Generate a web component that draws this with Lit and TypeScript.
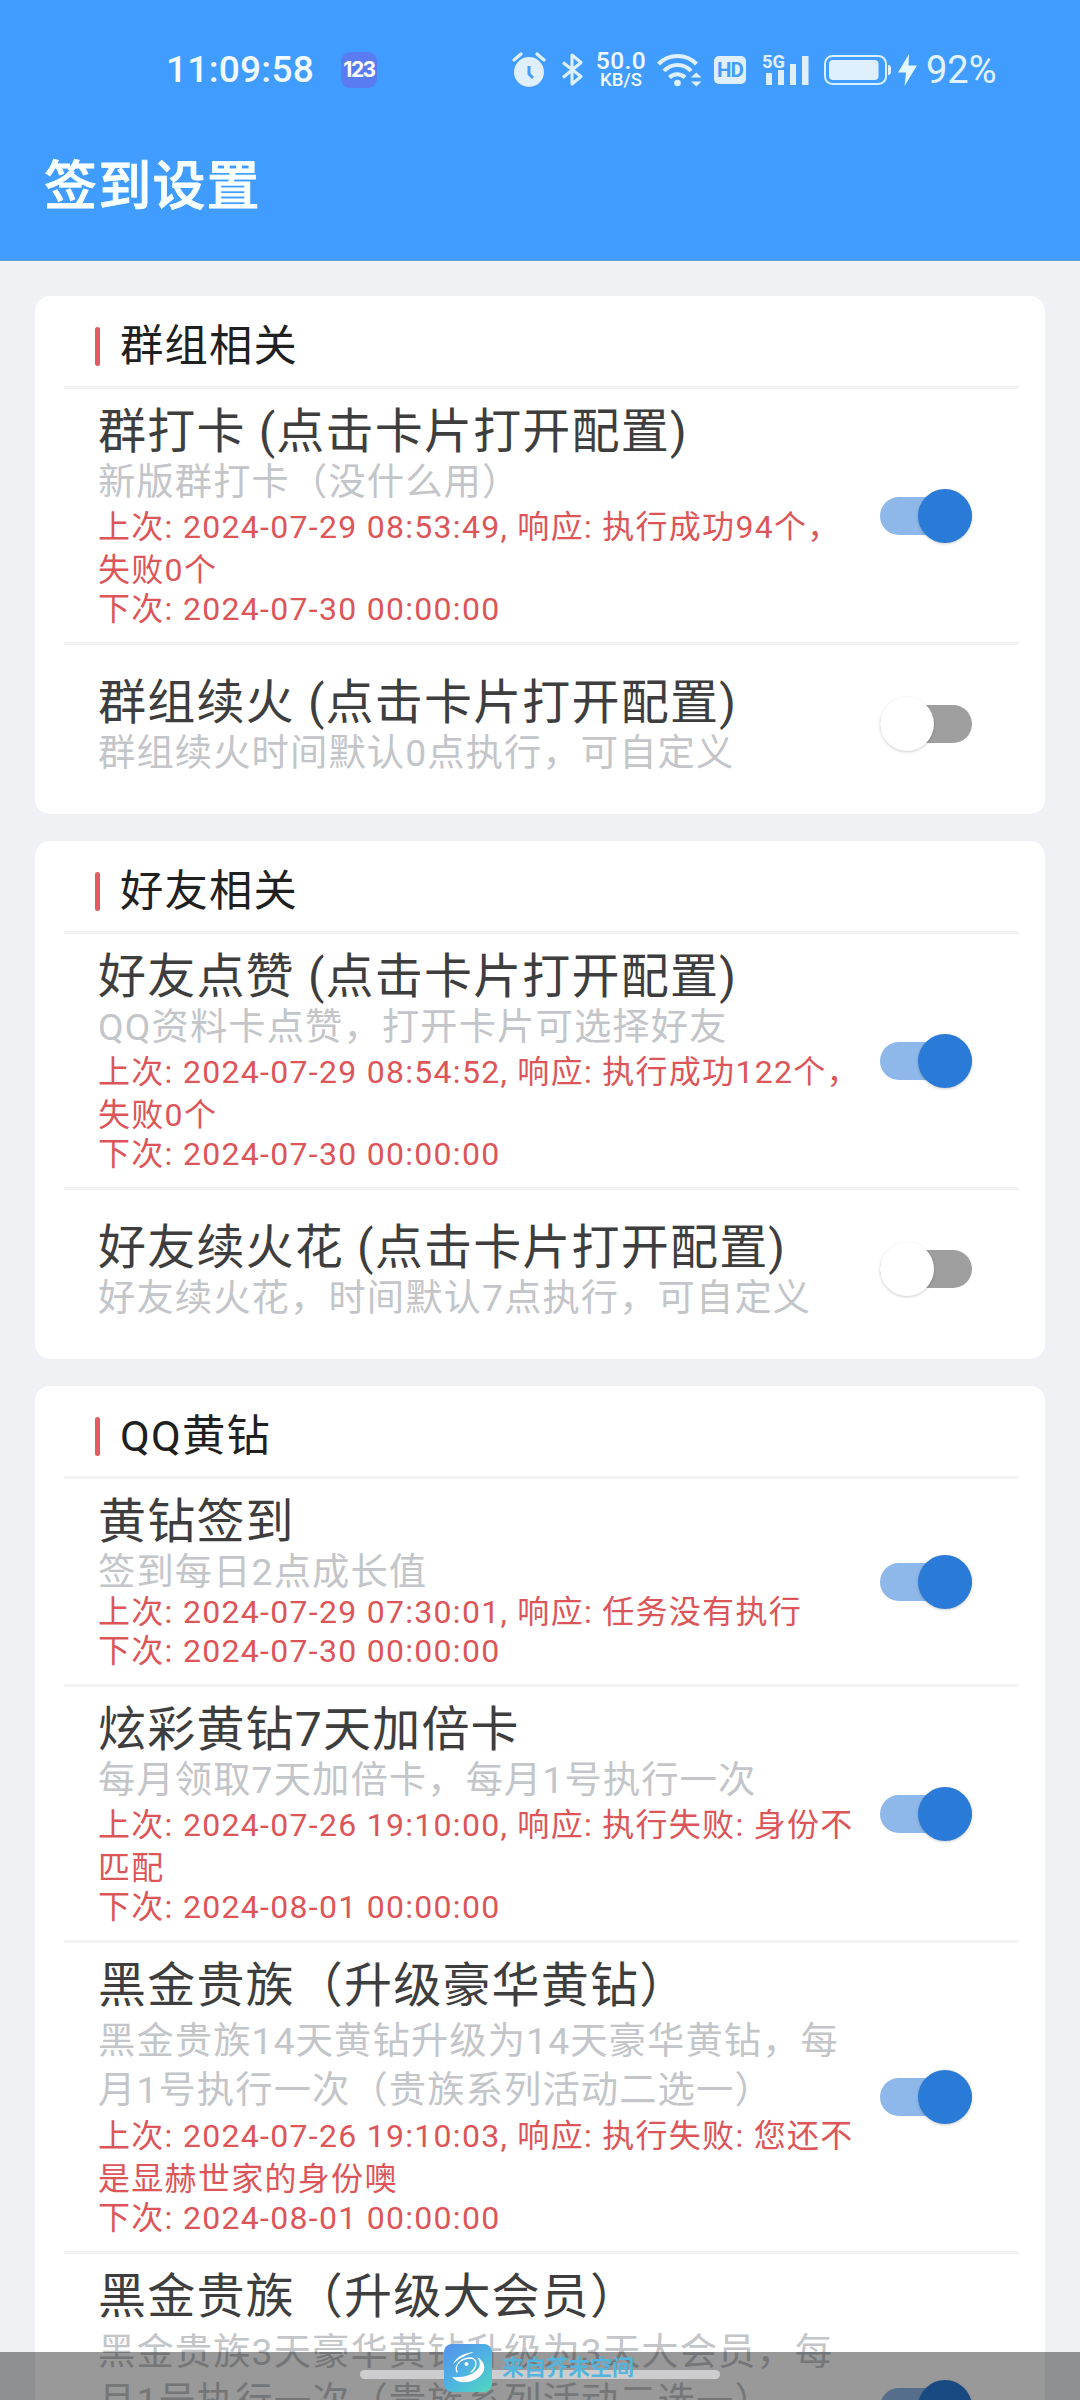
import { LitElement, html, css, svg } from "lit";
import { customElement, property } from "lit/decorators.js";
import { classMap } from "lit/directives/class-map.js";

interface Task {
  title: string;
  desc: string[];
  last?: string[];
  next?: string;
  on: boolean;
  clipped?: boolean;
}

interface Group {
  name: string;
  tasks: Task[];
}

const GROUPS: Group[] = [
  {
    name: "群组相关",
    tasks: [
      {
        title: "群打卡 (点击卡片打开配置)",
        desc: ["新版群打卡（没什么用）"],
        last: ["上次: 2024-07-29 08:53:49, 响应: 执行成功94个，", "失败0个"],
        next: "下次: 2024-07-30 00:00:00",
        on: true,
      },
      {
        title: "群组续火 (点击卡片打开配置)",
        desc: ["群组续火时间默认0点执行，可自定义"],
        on: false,
      },
    ],
  },
  {
    name: "好友相关",
    tasks: [
      {
        title: "好友点赞 (点击卡片打开配置)",
        desc: ["QQ资料卡点赞，打开卡片可选择好友"],
        last: ["上次: 2024-07-29 08:54:52, 响应: 执行成功122个，", "失败0个"],
        next: "下次: 2024-07-30 00:00:00",
        on: true,
      },
      {
        title: "好友续火花 (点击卡片打开配置)",
        desc: ["好友续火花，时间默认7点执行，可自定义"],
        on: false,
      },
    ],
  },
  {
    name: "QQ黄钻",
    tasks: [
      {
        title: "黄钻签到",
        desc: ["签到每日2点成长值"],
        last: ["上次: 2024-07-29 07:30:01, 响应: 任务没有执行"],
        next: "下次: 2024-07-30 00:00:00",
        on: true,
      },
      {
        title: "炫彩黄钻7天加倍卡",
        desc: ["每月领取7天加倍卡，每月1号执行一次"],
        last: ["上次: 2024-07-26 19:10:00, 响应: 执行失败: 身份不", "匹配"],
        next: "下次: 2024-08-01 00:00:00",
        on: true,
      },
      {
        title: "黑金贵族（升级豪华黄钻）",
        desc: ["黑金贵族14天黄钻升级为14天豪华黄钻，每", "月1号执行一次（贵族系列活动二选一）"],
        last: ["上次: 2024-07-26 19:10:03, 响应: 执行失败: 您还不", "是显赫世家的身份噢"],
        next: "下次: 2024-08-01 00:00:00",
        on: true,
      },
      {
        title: "黑金贵族（升级大会员）",
        desc: ["黑金贵族3天豪华黄钻升级为3天大会员，每", "月1号执行一次（贵族系列活动二选一）"],
        on: true,
        clipped: true,
      },
    ],
  },
];

@customElement("status-bar")
class StatusBar extends LitElement {
  static styles = css`
    :host {
      display: flex;
      align-items: center;
      height: 140px;
      padding-left: 166px;
      box-sizing: border-box;
      color: #f0faff;
      font-family: Roboto, "Noto Sans CJK SC", sans-serif;
      white-space: nowrap;
    }
    svg { display: block; flex: none; }
    .time { width: 175px; font-size: 37px; line-height: 44px; letter-spacing: 0.3px; font-weight: 500; }
    .app {
      width: 36px; height: 36px; border-radius: 9px; background: #5a7cf2;
      display: flex; align-items: center; justify-content: center;
      font: 700 21px/36px Inter, sans-serif; letter-spacing: -1.5px; color: #fff;
    }
    .alarm { margin-left: 135px; }
    .bt { margin-left: 15px; }
    .speed { margin-left: 11px; width: 54px; text-align: center; font-weight: 500; }
    .rate { font-size: 24.5px; line-height: 20px; letter-spacing: 0.5px; }
    .unit { font-size: 18.5px; line-height: 18px; }
    .wifi { margin-left: 9px; }
    .hd {
      margin-left: 12px; width: 32px; height: 28px; border-radius: 5px; background: #e0effc;
      color: #439cf8; font: 700 20.5px/28px Roboto, sans-serif; text-align: center;
      letter-spacing: -1px;
    }
    .signal { margin-left: 16px; }
    .battery { margin-left: 14px; }
    .bolt { margin-left: 6px; }
    .percent { margin-left: 8px; font-size: 38px; line-height: 44px; color: #e3f3fe; }
    .gen { font: 700 18px Roboto, sans-serif; }
  `;

  render() {
    return html`
      <span class="time">11:09:58</span>
      <span class="app">123</span>
      <svg class="alarm" width="34" height="36" viewBox="0 0 34 36" fill="none">
        <circle cx="17" cy="20" r="15" fill="#e0effc" />
        <path d="M2 8 9 2M32 8 25 2" stroke="#e0effc" stroke-width="3.2" stroke-linecap="round" />
        <path d="M17 14v8l4 4" stroke="#439cf8" stroke-width="3" />
      </svg>
      <svg class="bt" width="22" height="36" viewBox="0 0 22 36" fill="none" stroke="#dff1ff" stroke-width="3" stroke-linejoin="round">
        <path d="M2 10.500 20 24.500 11 32V3L20 10.500 2 25.500" />
      </svg>
      <div class="speed">
        <div class="rate">50.0</div>
        <div class="unit">KB/S</div>
      </div>
      <svg class="wifi" width="45" height="36" viewBox="0 0 45 36" fill="none" stroke="#dff1ff">
        <path d="M1.500 12A26.500 26.500 0 0 1 39.500 12" stroke-width="4" />
        <path d="M7 19A18 18 0 0 1 34 19" stroke-width="4" />
        <path d="M12.500 25.500A11 11 0 0 1 28 25.500" stroke-width="4" />
        <circle cx="20.500" cy="31" r="3.300" fill="#dff1ff" stroke="none" />
        <path d="M34 25.500 39.300 20.500 44.500 25.500ZM34 29.500H44.500L39.300 34.500Z" fill="#dff1ff" stroke="none" />
      </svg>
      <div class="hd">HD</div>
      <svg class="signal" width="48" height="34" viewBox="0 0 48 34" fill="#e0effc">
        <text class="gen" x="0" y="15" textLength="23" lengthAdjust="spacingAndGlyphs">5G</text>
        <path d="M4 20h6v12h-6zM16 17h6v15h-6zM28 11h6v21h-6zM40 3h6.500v29h-6.500z" />
      </svg>
      <svg class="battery" width="68" height="30" viewBox="0 0 68 30">
        <rect x="1" y="1" width="61" height="28" rx="7.500" fill="none" stroke="#d9f0ff" stroke-width="2" />
        <rect x="5" y="5" width="49.500" height="20" rx="4" fill="#e0effc" />
        <path d="M64 10q3 0 3 3v4q0 3-3 3z" fill="#e0effc" />
      </svg>
      <svg class="bolt" width="20" height="32" viewBox="0 0 20 32" fill="#e6f8ff">
        <path d="M11 0 0 18.500H8L6.500 32 19 11.500H10.500Z" />
      </svg>
      <span class="percent">92%</span>
    `;
  }
}

@customElement("toggle-switch")
class ToggleSwitch extends LitElement {
  @property({ type: Boolean }) on = false;

  static styles = css`
    :host { display: block; flex: none; }
    .track {
      display: flex; align-items: center; width: 92px; height: 38px; border-radius: 19px;
      background: #9f9f9f;
    }
    .track.on { background: #8eb8e9; justify-content: flex-end; }
    .thumb {
      flex: none; width: 54px; height: 54px; border-radius: 50%; background: #fff;
      box-shadow: 0 1px 3px rgba(0, 0, 0, 0.2);
    }
    .on .thumb { background: #2a7ad8; }
  `;

  render() {
    return html`<div class=${classMap({ track: true, on: this.on })}><div class="thumb"></div></div>`;
  }
}

@customElement("task-group")
class TaskGroup extends LitElement {
  @property({ attribute: false }) group!: Group;

  static styles = css`
    :host {
      display: block;
      flex: none;
      background: #fff;
      border-radius: 15px;
      padding: 0 27px 12px 29px;
      white-space: nowrap;
    }
    .heading {
      display: flex; align-items: center; height: 90px; padding: 11px 0 0 31px;
      box-sizing: border-box; gap: 20px;
    }
    .mark { width: 5px; height: 39px; border-radius: 2.5px; background: #e35a60; }
    .name { font-size: 43.3px; line-height: 52px; letter-spacing: 1.2px; color: #202020; }
    .task {
      display: flex; align-items: center; justify-content: space-between;
      min-height: 160px; box-sizing: border-box; padding-right: 46px;
      border-top: 3px solid #f2f2f3;
    }
    .text { padding: 13px 0 14px 34px; }
    .clipped { min-height: 309px; }
    .clipped .text { align-self: flex-start; }
    .title { font-size: 48px; line-height: 60px; letter-spacing: 1.2px; color: #3e3e3e; }
    .desc { font-size: 37.3px; line-height: 41px; letter-spacing: 1.1px; color: #c3c5c9; }
    .desc.wrapped { line-height: 49px; padding-top: 1px; margin-bottom: -3px; }
    .log { font-size: 32px; line-height: 38px; letter-spacing: 1.3px; color: #dc5558; }
    .log.wrapped { line-height: 43px; padding-top: 3px; margin-bottom: -2px; }
    .log:not(.wrapped) + .log { padding-top: 1px; }
  `;

  private block(kind: string, lines: string[]) {
    return html`<div class=${classMap({ [kind]: true, wrapped: lines.length > 1 })}>
      ${lines.map((line) => html`<div>${line}</div>`)}
    </div>`;
  }

  render() {
    return html`
      <div class="heading"><span class="mark"></span><span class="name">${this.group.name}</span></div>
      ${this.group.tasks.map(
        (task) => html`
          <div class=${classMap({ task: true, clipped: !!task.clipped })}>
            <div class="text">
              <div class="title">${task.title}</div>
              ${this.block("desc", task.desc)}
              ${task.last ? this.block("log", task.last) : null}
              ${task.next ? this.block("log", [task.next]) : null}
            </div>
            <toggle-switch ?on=${task.on}></toggle-switch>
          </div>
        `
      )}
    `;
  }
}

@customElement("app-root")
class AppRoot extends LitElement {
  static styles = css`
    :host {
      display: flex;
      flex-direction: column;
      position: relative;
      width: 1080px;
      height: 2400px;
      overflow: hidden;
      background: #eff1f5;
      font-family: Roboto, "Noto Sans CJK SC", sans-serif;
    }
    .top { flex: none; height: 261px; background: #409dff; border-bottom: 1px solid #5b9fdc; box-sizing: border-box; }
    .page-title {
      padding-left: 44px; font-size: 53px; line-height: 95px; letter-spacing: 1.2px;
      font-weight: 500; color: #f8ffff; -webkit-text-stroke: 0.8px #f8ffff;
    }
    .groups { display: flex; flex-direction: column; gap: 27px; padding: 35px 35px 0; }
    .nav {
      position: absolute; left: 0; right: 0; bottom: 0; height: 48px;
      background: rgba(0, 0, 0, 0.4);
    }
    .pill {
      position: absolute; left: 360px; top: 18px; width: 360px; height: 9px; border-radius: 5px;
      background: #cdcdcf;
    }
    .source {
      position: absolute; left: 444px; top: -8px; display: flex; align-items: center; gap: 10px;
      font-size: 22px; line-height: 48px; font-weight: 700; color: #55b4dc; white-space: nowrap;
    }
    .source svg { display: block; }
  `;

  render() {
    return html`
      <div class="top">
        <status-bar></status-bar>
        <div class="page-title">签到设置</div>
      </div>
      <div class="groups">
        ${GROUPS.map((group) => html`<task-group .group=${group}></task-group>`)}
      </div>
      <div class="nav">
        <div class="pill"></div>
        <div class="source">
          <svg width="48" height="48" viewBox="0 0 48 48">
            <defs>
              <linearGradient id="sea" x1="0" y1="0" x2="0.8" y2="1">
                <stop offset="0" stop-color="#5592ec" />
                <stop offset="0.55" stop-color="#4eb2e2" />
                <stop offset="1" stop-color="#4fd2c4" />
              </linearGradient>
            </defs>
            <rect width="48" height="48" rx="8" fill="url(#sea)" />
            ${svg`<path d="M9 20C13 12 20 9 30 8 23 11 15 14 9 20Z" fill="#fff" />
            <path d="M33 13C42 18 43 27 35 33 26 40 14 40 8 33 19 34 29 31 34 25 37 21 36 17 33 13Z" fill="#fff" />
            <path d="M13 28C10 21 17 14 27 14 34 15 33 24 27 28" fill="none" stroke="#fff" stroke-width="1.300" stroke-linecap="round" />
            <circle cx="22.500" cy="20" r="2" fill="#fff" />`}
          </svg>
          <span>来自芥末空间</span>
        </div>
      </div>
    `;
  }
}
